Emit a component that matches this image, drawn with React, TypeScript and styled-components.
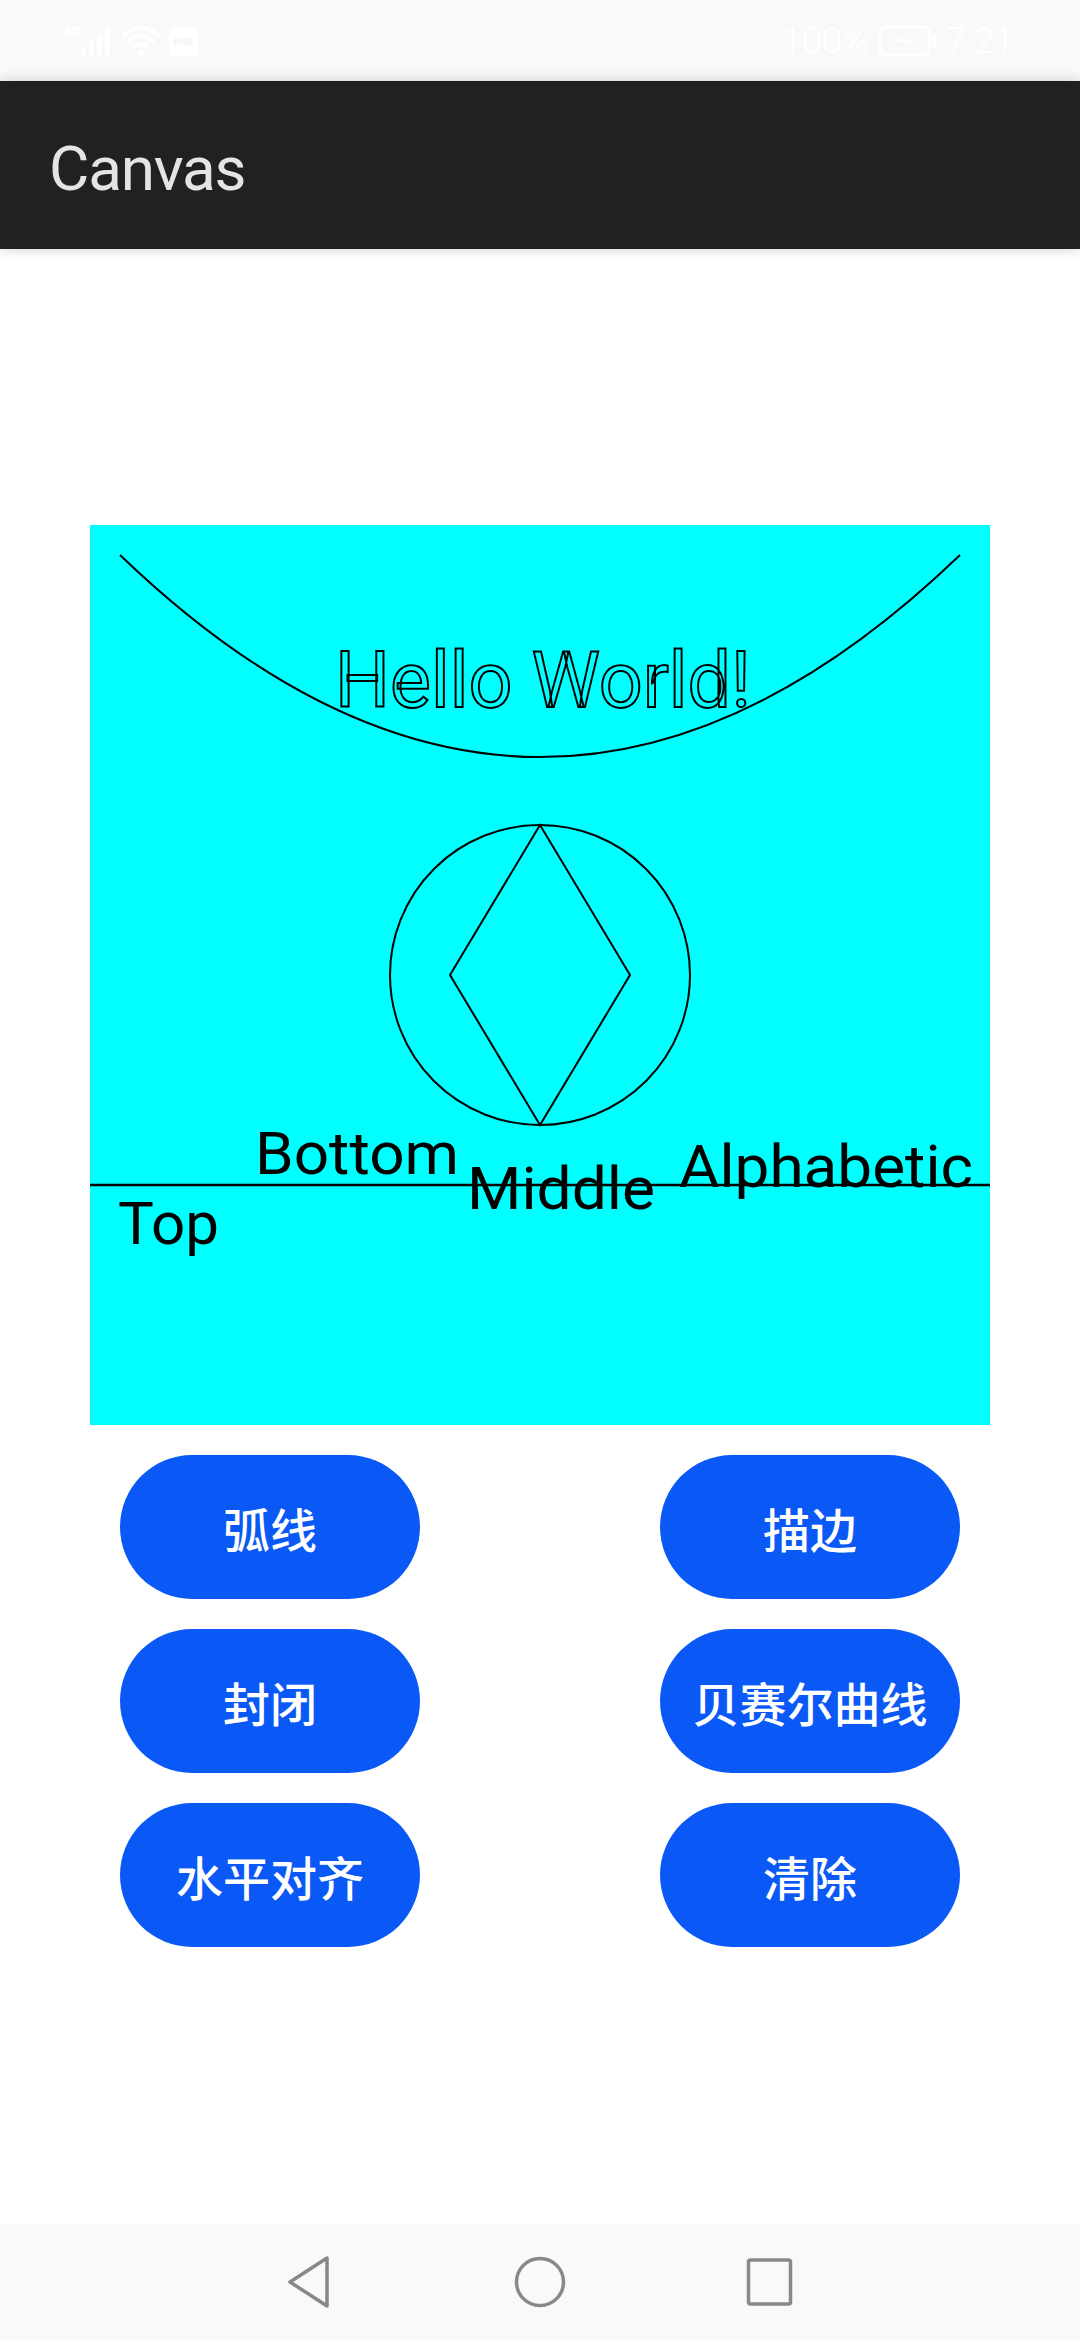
import React from "react";
import styled, { createGlobalStyle } from "styled-components";

const GlobalStyle = createGlobalStyle`
  html, body {
    margin: 0;
    padding: 0;
    background: #ffffff;
    font-family: Roboto, "Noto Sans", "Noto Sans CJK SC", sans-serif;
  }
`;

const Screen = styled.div`
  width: 1080px;
  height: 2340px;
  display: flex;
  flex-direction: column;
  background: #ffffff;
  overflow: hidden;
`;

const StatusBar = styled.div`
  height: 81px;
  flex: none;
  background: #f9f9f9;
  display: flex;
  align-items: center;
  justify-content: space-between;
  padding: 0 66px 0 60px;
  box-sizing: border-box;
`;

const StatusGroup = styled.div`
  display: flex;
  align-items: center;
  gap: 9px;
`;

const StatusText = styled.span`
  color: #ffffff;
  font-family: Roboto, sans-serif;
  font-weight: 300;
  font-size: 36px;
  line-height: 1;
`;

const AppBar = styled.header`
  height: 168px;
  flex: none;
  background: #212121;
  display: flex;
  align-items: center;
  padding: 7px 0 0 49px;
  box-sizing: border-box;
  position: relative;
  z-index: 1;
  box-shadow: 0 0 12px rgba(0, 0, 0, 0.2);
`;

const Title = styled.h1`
  margin: 0;
  color: #e4e4e4;
  font-family: Roboto, sans-serif;
  font-weight: 400;
  font-size: 62px;
  letter-spacing: -1.2px;
`;

const Content = styled.main`
  flex: 1;
  display: flex;
  flex-direction: column;
  align-items: center;
  padding-top: 276px;
`;

const CanvasSvg = styled.svg`
  display: block;
  width: 900px;
  height: 900px;
  background: #00ffff;
`;

const ButtonGrid = styled.div`
  width: 900px;
  box-sizing: border-box;
  padding: 0 30px;
  margin-top: 30px;
  display: grid;
  grid-template-columns: 300px 300px;
  justify-content: space-between;
  row-gap: 30px;
`;

const PillButton = styled.button`
  width: 300px;
  height: 144px;
  border: none;
  border-radius: 72px;
  background: #0a59f7;
  color: #ffffff;
  font-family: "Noto Sans CJK SC", "Noto Sans", sans-serif;
  font-weight: 500;
  font-size: 47px;
  padding: 0;
  display: flex;
  align-items: center;
  justify-content: center;
  cursor: pointer;
`;

const NavBar = styled.nav`
  height: 116px;
  flex: none;
  background: #f9f9f9;
  display: flex;
  align-items: center;
  justify-content: center;
  gap: 170px;
`;

const NavIcon = styled.svg`
  width: 60px;
  height: 60px;
  display: block;
`;

const labelFont = "Roboto, sans-serif";

const buttons = ["弧线", "描边", "封闭", "贝赛尔曲线", "水平对齐", "清除"];

export default function App() {
  return (
    <>
      <GlobalStyle />
      <Screen>
        <StatusBar>
          <StatusGroup>
            <svg width="142" height="40" viewBox="0 0 142 40">
              <text x="3" y="17" fontSize="15" fontWeight="700" fill="#fff" fontFamily={labelFont}>
                4G
              </text>
              <rect x="21" y="27" width="5" height="7" rx="1" fill="#fff" />
              <rect x="29" y="20" width="5" height="14" rx="1" fill="#fff" />
              <rect x="37" y="13" width="5" height="21" rx="1" fill="#fff" />
              <rect x="45" y="5" width="5" height="29" rx="1" fill="#fff" />
              <path d="M64 14 A24 24 0 0 1 98 14" stroke="#fff" strokeWidth="4" fill="none" strokeLinecap="round" />
              <path d="M69.5 20 A16 16 0 0 1 92.5 20" stroke="#fff" strokeWidth="4" fill="none" strokeLinecap="round" />
              <path d="M75 26 A8 8 0 0 1 87 26" stroke="#fff" strokeWidth="4" fill="none" strokeLinecap="round" />
              <circle cx="81" cy="32" r="3" fill="#fff" />
              <rect x="109" y="6" width="29" height="29" rx="5" fill="#fff" />
              <text x="123.5" y="24" fontSize="9" fontWeight="700" fill="#f3f3f3" textAnchor="middle" fontFamily={labelFont}>
                HMS
              </text>
            </svg>
          </StatusGroup>
          <StatusGroup>
            <StatusText>100%</StatusText>
            <svg width="60" height="32" viewBox="0 0 60 32">
              <rect x="2" y="2" width="49" height="28" rx="5" stroke="#fff" strokeWidth="3" fill="none" />
              <rect x="54" y="10" width="4" height="12" rx="1" fill="#fff" />
              <path d="M14 16 L26 12 L25 15 L38 16 L26 20 L27 17 Z" fill="#fff" />
            </svg>
            <StatusText>7:21</StatusText>
          </StatusGroup>
        </StatusBar>

        <AppBar>
          <Title>Canvas</Title>
        </AppBar>

        <Content>
          <CanvasSvg viewBox="0 0 900 900">
            <path d="M30 30 Q450 434 870 30" stroke="#000" strokeWidth="2" fill="none" />
            <text
              x="245"
              y="182"
              fontSize="78"
              fontFamily={labelFont}
              fill="none"
              stroke="#000"
              strokeWidth="2"
              textLength="416"
              lengthAdjust="spacingAndGlyphs"
            >
              Hello World!
            </text>
            <circle cx="450" cy="450" r="150" stroke="#000" strokeWidth="2" fill="none" />
            <polygon points="450,300 540,450 450,600 360,450" stroke="#000" strokeWidth="2" fill="none" />
            <line x1="0" y1="660" x2="900" y2="660" stroke="#000" strokeWidth="2.5" />
            <text x="28" y="719" fontSize="60" fontFamily={labelFont} fill="#000" textLength="101" lengthAdjust="spacingAndGlyphs">
              Top
            </text>
            <text x="165" y="649" fontSize="60" fontFamily={labelFont} fill="#000" textLength="204" lengthAdjust="spacingAndGlyphs">
              Bottom
            </text>
            <text x="377" y="684" fontSize="60" fontFamily={labelFont} fill="#000" textLength="188" lengthAdjust="spacingAndGlyphs">
              Middle
            </text>
            <text x="589" y="662" fontSize="60" fontFamily={labelFont} fill="#000" textLength="294" lengthAdjust="spacingAndGlyphs">
              Alphabetic
            </text>
          </CanvasSvg>

          <ButtonGrid>
            {buttons.map((label) => (
              <PillButton key={label}>{label}</PillButton>
            ))}
          </ButtonGrid>
        </Content>

        <NavBar>
          <NavIcon viewBox="0 0 60 60">
            <polygon
              points="10,30 47,6 47,54"
              stroke="#888"
              strokeWidth="3.5"
              fill="none"
              strokeLinejoin="round"
            />
          </NavIcon>
          <NavIcon viewBox="0 0 60 60">
            <circle cx="30" cy="30" r="23.5" stroke="#888" strokeWidth="3.5" fill="none" />
          </NavIcon>
          <NavIcon viewBox="0 0 60 60">
            <rect x="8.5" y="8" width="42" height="44" rx="2" stroke="#888" strokeWidth="3.5" fill="none" />
          </NavIcon>
        </NavBar>
      </Screen>
    </>
  );
}
